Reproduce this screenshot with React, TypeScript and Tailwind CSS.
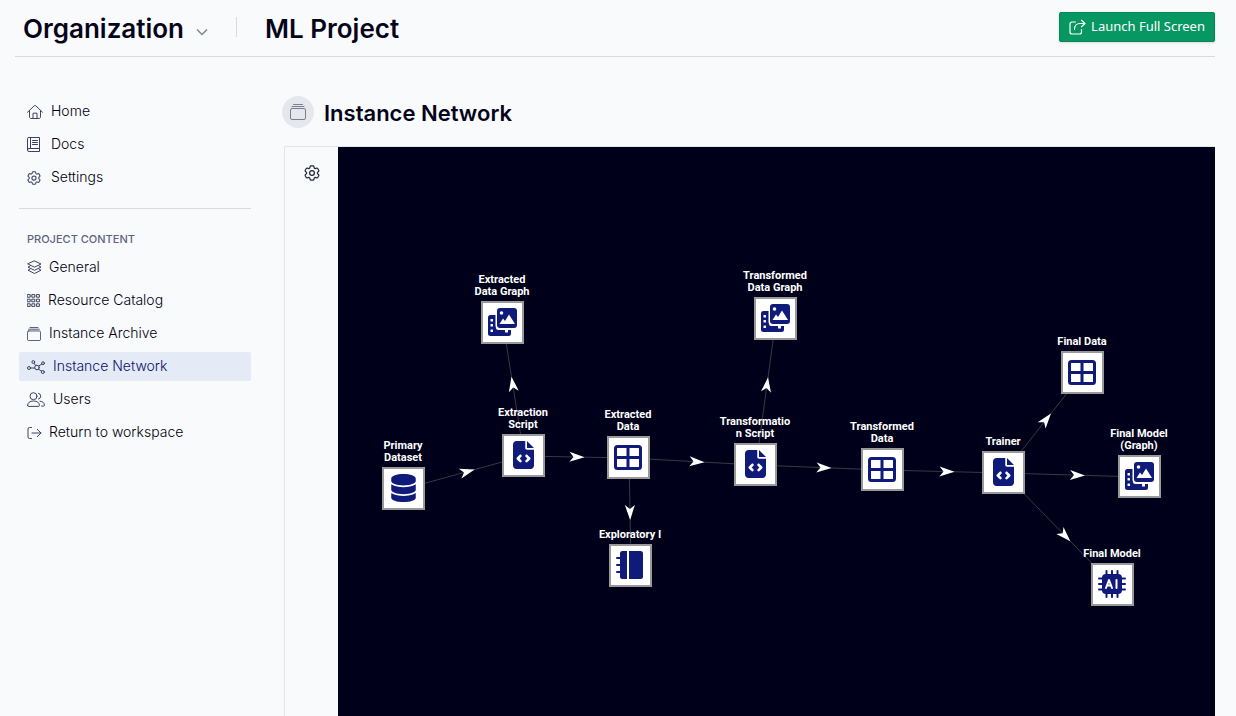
import type { ReactNode } from 'react';
import { FaDatabase, FaFileCode } from 'react-icons/fa6';

type IconProps = { className?: string };

function Line({ className, box = '0 0 16 16', children }: IconProps & { box?: string; children: ReactNode }) {
  return (
    <svg viewBox={box} className={className} fill="none" stroke="currentColor" strokeWidth="1" strokeLinecap="round" strokeLinejoin="round" aria-hidden="true">
      {children}
    </svg>
  );
}

const HomeIcon = ({ className }: IconProps) => (
  <Line className={className}>
    <path d="M.6 8.2 7.2 1.8a1.2 1.2 0 0 1 1.6 0l6.6 6.4M2.5 6.6v6.2c0 1 .6 1.7 1.6 1.7h7.8c1 0 1.6-.7 1.6-1.7V6.6M6 14.3V9.2h4v5.1" />
  </Line>
);

const DocsIcon = ({ className }: IconProps) => (
  <Line className={className} box="0 0 13 15">
    <path d="M1.500.500h11v11H2A1.500 1.500 0 0 0 2 14.500h10.500v-3M.500 13V1.500a1 1 0 0 1 1-1M3.500.500v11M5.500 3.500h5M5.500 5.500h5M5.500 7.500h5" />
  </Line>
);

const GearIcon = ({ className }: IconProps) => (
  <Line className={className} box="2 2 20 20">
    <g strokeWidth="1.5">
      <path d="M9.594 3.940c.09-.542.56-.94 1.110-.94h2.593c.55 0 1.020.398 1.110.940l.213 1.281c.063.374.313.686.645.870.074.040.147.083.220.127.325.196.720.257 1.075.124l1.217-.456a1.125 1.125 0 0 1 1.370.490l1.296 2.247a1.125 1.125 0 0 1-.260 1.431l-1.003.827c-.293.241-.438.613-.430.992a7.723 7.723 0 0 1 0 .255c-.008.378.137.750.430.991l1.004.827c.424.350.534.955.260 1.430l-1.298 2.247a1.125 1.125 0 0 1-1.369.491l-1.217-.456c-.355-.133-.750-.072-1.076.124a6.470 6.470 0 0 1-.220.128c-.331.183-.581.495-.644.869l-.213 1.281c-.090.543-.560.940-1.110.940h-2.594c-.550 0-1.019-.398-1.110-.940l-.213-1.281c-.062-.374-.312-.686-.644-.870a6.520 6.520 0 0 1-.220-.127c-.325-.196-.720-.257-1.076-.124l-1.217.456a1.125 1.125 0 0 1-1.369-.490l-1.297-2.247a1.125 1.125 0 0 1 .260-1.431l1.004-.827c.292-.240.437-.613.430-.991a6.932 6.932 0 0 1 0-.255c.007-.380-.138-.751-.430-.992l-1.004-.827a1.125 1.125 0 0 1-.260-1.430l1.297-2.247a1.125 1.125 0 0 1 1.370-.491l1.216.456c.356.133.751.072 1.076-.124.072-.044.146-.086.220-.128.332-.183.582-.495.644-.869l.214-1.280Z" />
      <circle cx="12" cy="12" r="3" />
    </g>
  </Line>
);

const LayersIcon = ({ className }: IconProps) => (
  <Line className={className} box="0 0 15 15">
    <path d="M7.500 1 14 4 7.500 7.200 1 4ZM3 6 1 7.100l6.500 3.200L14 7.100 12 6M3 9.100 1 10.200l6.500 3.300 6.500-3.300-2-1.100" />
  </Line>
);

const CatalogIcon = ({ className }: IconProps) => (
  <Line className={className} box="0 0 13 13">
    {[0.6, 5.2, 9.8].map((y) =>
      [0.6, 5.2, 9.8].map((x) => <rect key={`${x}-${y}`} x={x} y={y} width="2.600" height="2.600" />),
    )}
  </Line>
);

const ArchiveIcon = ({ className }: IconProps) => (
  <Line className={className}>
    <path d="M3.500.500h9M2 2.500h12" />
    <rect x=".500" y="4.500" width="15" height="11" rx="1.500" />
  </Line>
);

const NetworkIcon = ({ className }: IconProps) => (
  <Line className={className} box="0 0 18 14">
    <circle cx="10" cy="7.500" r="2.300" />
    <circle cx="2" cy="8" r="1.500" />
    <circle cx="6.300" cy="2" r="1.400" />
    <circle cx="16" cy="3.200" r="1.400" />
    <circle cx="15.800" cy="12" r="1.500" />
    <path d="M3.500 8h4.200M7 3.300l1.700 2.300M11.800 6l3-2M11.600 9.200l3 2" />
  </Line>
);

const UsersIcon = ({ className }: IconProps) => (
  <Line className={className} box="0 0 18 15">
    <circle cx="6.500" cy="4.200" r="3.500" />
    <path d="M.600 13.500c0-3 2.400-4.500 5.900-4.500s5.900 1.500 5.900 4.500c0 .600-.400.900-.900.900h-10c-.500 0-.900-.300-.900-.900ZM11.500 1.300a3 3 0 0 1 0 5.800M13 9.200c2.800.200 4.400 1.500 4.400 4.100 0 .500-.300.800-.800.800h-2" />
  </Line>
);

const ReturnIcon = ({ className }: IconProps) => (
  <Line className={className} box="0 0 15 14">
    <path d="M4.500 1.500h-2a1.500 1.500 0 0 0-1.500 1.500v8a1.500 1.500 0 0 0 1.500 1.500h2M5 7h9M10.300 3.300 14 7l-3.700 3.700" />
  </Line>
);

const ShareIcon = ({ className }: IconProps) => (
  <Line className={className} box="0 0 17 16">
    <path strokeWidth="1.200" d="M6.500 3H3a2 2 0 0 0-2 2v8a2 2 0 0 0 2 2h7.500a2 2 0 0 0 2-2v-2.500M5.500 10.500C5.500 7 7.500 4.500 11 4.500h5M12.500 1.200 16 4.500l-3.500 3.300" />
  </Line>
);

const TableIcon = ({ className }: IconProps) => (
  <svg viewBox="0 0 28 28" className={className} fill="none" stroke="currentColor" strokeWidth="3" aria-hidden="true">
    <rect x="1.500" y="3.500" width="25" height="22" rx="2" />
    <path d="M14 3.500v22M1.500 14.500h25" />
  </svg>
);

const GraphIcon = ({ className }: IconProps) => (
  <svg viewBox="0 0 29 29" className={className} fill="currentColor" aria-hidden="true">
    <path d="M2.500 7H8v12.500A2.500 2.500 0 0 0 10.500 22H23v3.500a2.500 2.500 0 0 1-2.500 2.500h-18A2.500 2.500 0 0 1 0 25.500v-16A2.500 2.500 0 0 1 2.500 7Z" />
    <rect x="7.500" y="-1" width="23" height="22.500" rx="4" fill="#fff" />
    <rect x="9" y="0" width="20" height="20" rx="3" />
    <g fill="#fff">
      <rect x="2.500" y="11" width="2.500" height="2.500" rx=".500" />
      <rect x="2.500" y="16" width="2.500" height="2.500" rx=".500" />
      <rect x="2.500" y="21.500" width="2.500" height="2.500" rx=".500" />
      <rect x="17" y="21" width="3" height="3.500" rx=".500" />
      <circle cx="13.500" cy="5" r="1.800" />
      <path d="m11.500 16 3.500-5.500 2 2.500 4-6.500 6 9.500Z" />
    </g>
  </svg>
);

const NotebookIcon = ({ className }: IconProps) => (
  <svg viewBox="0 0 28 28" className={className} fill="currentColor" aria-hidden="true">
    <path d="M6.500 0H11v28H6.500A2.500 2.500 0 0 1 4 25.500V2.500A2.500 2.500 0 0 1 6.500 0ZM13 0h11.500A2.500 2.500 0 0 1 27 2.500v23a2.500 2.500 0 0 1-2.500 2.500H13Z" />
    <path d="M1 7h4M1 14h4M1 21h4" stroke="currentColor" strokeWidth="2" strokeLinecap="round" />
  </svg>
);

const ChipIcon = ({ className }: IconProps) => (
  <svg viewBox="0 0 28 28" className={className} fill="none" stroke="currentColor" strokeWidth="2" strokeLinecap="round" aria-hidden="true">
    <path d="M8.500 1v26M14 1v26M19.500 1v26M1 8.500h26M1 14h26M1 19.500h26" />
    <rect x="4" y="4" width="20" height="20" rx="4" fill="currentColor" stroke="none" />
    <path d="m8 18 3-8 3 8M9 15.500h4M18.500 10v8" stroke="#fff" strokeLinejoin="round" />
  </svg>
);

const mainLinks = [
  { label: 'Home', icon: <HomeIcon className="size-4" />, gap: 'gap-2' },
  { label: 'Docs', icon: <DocsIcon className="h-[15px] w-[13px]" />, gap: 'gap-[11px]' },
  { label: 'Settings', icon: <GearIcon className="size-[14px]" />, gap: 'gap-[10px]' },
];

const projectLinks = [
  { label: 'General', icon: <LayersIcon className="size-[15px]" />, gap: 'gap-[7px]' },
  { label: 'Resource Catalog', icon: <CatalogIcon className="size-[13px]" />, gap: 'gap-2' },
  { label: 'Instance Archive', icon: <ArchiveIcon className="size-[14px]" />, gap: 'gap-2' },
  { label: 'Instance Network', icon: <NetworkIcon className="h-[14px] w-[18px]" />, gap: 'gap-2', active: true },
  { label: 'Users', icon: <UsersIcon className="h-[15px] w-[18px]" />, gap: 'gap-2' },
  { label: 'Return to workspace', icon: <ReturnIcon className="h-[14px] w-[15px]" />, gap: 'gap-[7px]' },
];

function NavList({ links }: { links: { label: string; icon: ReactNode; gap: string; active?: boolean }[] }) {
  return (
    <ul className="flex flex-col gap-1">
      {links.map(({ label, icon, gap, active }) => (
        <li key={label}>
          <a
            href="#"
            aria-current={active ? 'page' : undefined}
            className={`flex h-[29px] items-center rounded-xs px-2 text-sm font-light ${gap} ${active ? 'bg-[#e4eaf6] text-[#0a1068]' : 'text-[#00000f]'}`}
          >
            <span className="shrink-0 text-[#3c4260]">{icon}</span>
            <span className="pb-px">{label}</span>
          </a>
        </li>
      ))}
    </ul>
  );
}

const icons = {
  data: <FaDatabase className="h-7 w-[25px]" />,
  script: <FaFileCode className="h-7 w-[21px]" />,
  graph: <GraphIcon className="size-[29px]" />,
  table: <TableIcon className="size-7" />,
  notebook: <NotebookIcon className="size-7" />,
  chip: <ChipIcon className="size-7" />,
};

type GraphNode = { x: number; y: number; lines: string[]; icon: keyof typeof icons };

// Node positions are box centres on the canvas.
const nodes: Record<string, GraphNode> = {
  primary: { x: 66, y: 342, lines: ['Primary', 'Dataset'], icon: 'data' },
  extraction: { x: 186, y: 309, lines: ['Extraction', 'Script'], icon: 'script' },
  extractedGraph: { x: 165, y: 176, lines: ['Extracted', 'Data Graph'], icon: 'graph' },
  extracted: { x: 291, y: 311, lines: ['Extracted', 'Data'], icon: 'table' },
  exploratory: { x: 293, y: 419, lines: ['Exploratory I'], icon: 'notebook' },
  transformation: { x: 418, y: 318, lines: ['Transformatio', 'n Script'], icon: 'script' },
  transformedGraph: { x: 438, y: 172, lines: ['Transformed', 'Data Graph'], icon: 'graph' },
  transformed: { x: 545, y: 323, lines: ['Transformed', 'Data'], icon: 'table' },
  trainer: { x: 666, y: 326, lines: ['Trainer'], icon: 'script' },
  finalData: { x: 745, y: 226, lines: ['Final Data'], icon: 'table' },
  finalGraph: { x: 802, y: 330, lines: ['Final Model', '(Graph)'], icon: 'graph' },
  finalModel: { x: 775, y: 438, lines: ['Final Model'], icon: 'chip' },
};

// [source, target, distance of the arrow tip past the midpoint]
const edges: [string, string, number][] = [
  ['primary', 'extraction', 11],
  ['extraction', 'extractedGraph', 13],
  ['extraction', 'extracted', 8],
  ['extracted', 'exploratory', 8],
  ['extracted', 'transformation', 12],
  ['transformation', 'transformedGraph', 15],
  ['transformation', 'transformed', 12],
  ['transformed', 'trainer', 11],
  ['trainer', 'finalData', 12],
  ['trainer', 'finalGraph', 13],
  ['trainer', 'finalModel', 17],
];

function Network() {
  return (
    <div className="relative min-w-0 flex-1 overflow-hidden bg-[#00001a]">
      <svg className="absolute inset-0 size-full" aria-hidden="true">
        {edges.map(([from, to, shift]) => {
          const a = nodes[from];
          const b = nodes[to];
          const angle = (Math.atan2(b.y - a.y, b.x - a.x) * 180) / Math.PI;
          return (
            <g key={`${from}-${to}`}>
              <line x1={a.x} y1={a.y} x2={b.x} y2={b.y} stroke="#383846" />
              <path
                d="M0 0-15-5-11 0-15 5Z"
                fill="#fff"
                transform={`translate(${(a.x + b.x) / 2} ${(a.y + b.y) / 2}) rotate(${angle}) translate(${shift} 0)`}
              />
            </g>
          );
        })}
      </svg>
      {Object.entries(nodes).map(([id, node]) => (
        <div key={id} className="absolute" style={{ left: node.x - 22, top: node.y - 22 }}>
          <div className="flex size-[43px] items-center justify-center border-2 border-[#999] bg-white pr-px pb-px text-[#101a78]">
            {icons[node.icon]}
          </div>
          <p className="absolute right-px bottom-full left-0 mb-[3px] flex flex-col items-center font-['Roboto',sans-serif] text-[11px] leading-3 font-bold whitespace-nowrap text-white">
            {node.lines.map((line) => (
              <span key={line}>{line}</span>
            ))}
          </p>
        </div>
      ))}
    </div>
  );
}

export default function App() {
  return (
    <div className="flex min-h-screen flex-col bg-[#f9fafc] font-['Inter','Noto_Sans',sans-serif] text-[#05051a]">
      <header className="mr-[21px] ml-[15px] flex h-[57px] items-center border-b border-[#d8dadd] pb-[2px]">
        <button type="button" className="ml-2 flex items-center gap-3 pt-[2px] text-[26px] font-semibold">
          Organization
          <svg viewBox="0 0 12 8" className="mt-2 h-2 w-3" fill="none" stroke="#7d8597" strokeWidth="1.500" aria-hidden="true">
            <path d="m1 1.500 5 5 5-5" />
          </svg>
        </button>
        <span className="ml-7 h-5 w-px bg-[#d8dadd]" />
        <h1 className="ml-7 pt-[2px] text-[26px] font-semibold">ML Project</h1>
        <button
          type="button"
          className="ml-auto flex h-[30px] items-center gap-[5px] rounded-xs border border-[#078552] bg-[#079763] px-[9px] font-['Noto_Sans',sans-serif] text-[13px] text-white shadow-sm"
        >
          <ShareIcon className="h-4 w-[17px]" />
          Launch Full Screen
        </button>
      </header>

      <div className="flex flex-1">
        <nav className="ml-[19px] w-[232px] shrink-0 pt-10">
          <NavList links={mainLinks} />
          <hr className="mt-4 border-[#d8dadd]" />
          <h2 className="mt-[22px] mb-[6px] px-2 text-[11px] leading-4 font-medium text-[#5c6480]">PROJECT CONTENT</h2>
          <NavList links={projectLinks} />
        </nav>

        <main className="mr-[21px] ml-[31px] flex min-w-0 flex-1 flex-col pt-[39px]">
          <div className="flex items-center gap-[10px]">
            <span className="flex size-8 items-center justify-center rounded-full bg-[#e5e7ec] text-[#777e96]">
              <ArchiveIcon className="size-4" />
            </span>
            <h2 className="pt-[3px] text-[22px] leading-[29px] font-semibold">Instance Network</h2>
          </div>
          <section className="mt-[18px] ml-[2px] flex flex-1 rounded-t-xs border-t border-l border-[#e2e4e9]">
            <div className="flex w-[53px] shrink-0 items-start justify-center pt-[18px]">
              <button type="button" aria-label="Network settings" className="text-[#202638]">
                <GearIcon className="size-4" />
              </button>
            </div>
            <Network />
          </section>
        </main>
      </div>
    </div>
  );
}
